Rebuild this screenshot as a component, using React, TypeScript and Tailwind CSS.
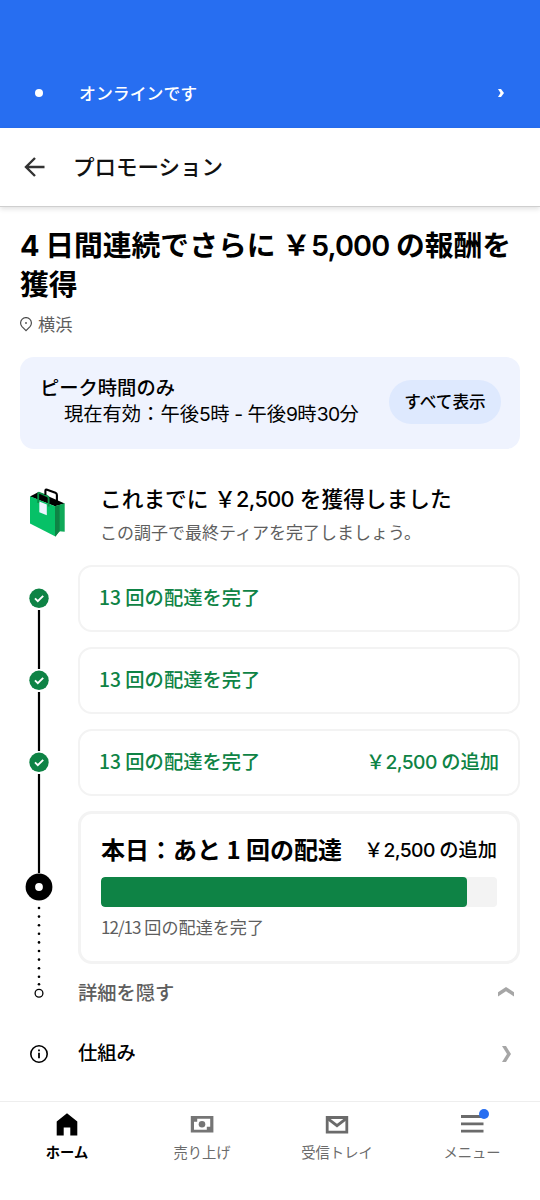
import React from "react";

interface StepCardProps {
    label: React.ReactNode;
    bonus?: React.ReactNode;
}

interface NavItemProps {
    label: string;
    active?: boolean;
    icon: React.ReactNode;
}

const checkpoints = [33, 115, 197];
const dots = [343, 351.6, 360.2, 368.8, 377.4, 386, 394.6, 403.2, 411.8, 419.2];

const progress = 12 / 13;

// Full-width yen sign
const YEN = "\uFFE5";

function Num({ children }: { children: React.ReactNode }) {
    return <span className="font-[Inter,sans-serif] leading-none tracking-[-0.03em]">{children}</span>;
}

function Timeline() {
    return (
        <svg width="30" height="440" viewBox="0 0 30 440" className="shrink-0">
            <path d="M15 45V104M15 127V186M15 209V308" stroke="#000" strokeWidth="2.2" />
            {checkpoints.map((y) => (
                <g key={y}>
                    <circle cx="15" cy={y + 0.3} r="9.7" fill="#0e8345" />
                    <path d={`M11 ${y + 0.4}l2.8 2.8 5.4-5.4`} fill="none" stroke="#fff" strokeWidth="1.9" />
                </g>
            ))}
            <circle cx="15" cy="322" r="13.4" fill="#000" />
            <circle cx="15" cy="322" r="3.9" fill="#fff" />
            {dots.map((y) => (
                <circle key={y} cx="15" cy={y} r="1.3" fill="#000" />
            ))}
            <circle cx="15" cy="428.3" r="3.9" fill="#fff" stroke="#000" strokeWidth="1.3" />
        </svg>
    );
}

function BagIcon() {
    return (
        <svg width="36" height="50" viewBox="0 0 36 50">
            <path d="M0 8.5 8.5 4 34.7 15.5 25 18.2z" fill="#000" />
            <path d="M0 8.3 25 18.2v30L0 35.5z" fill="#06c167" />
            <path d="M25 18.2 34.7 15.3v28.5l-5.4-.6-3.6 5-.7.2z" fill="#0fa958" />
            <path d="M25 18.2 29.6 17v26.2l-4 5-.6.2z" fill="#0e8345" />
            <path d="M9.3 13.5 16.8 16.5v10.8L9.3 24.3z" fill="#edf5ff" />
            <path d="M8.2 15V6q0-1.7 1.6-1L17 8q1.6.6 1.6 2.2v8.3" fill="none" stroke="#0b8f47" strokeWidth="1.9" />
            <path d="M15.4 7V2.8q0-1.7 1.7-1.1l8.3 3.1q1.5.6 1.5 2.2V15" fill="none" stroke="#000" strokeWidth="2.1" />
        </svg>
    );
}

function StepCard({ label, bonus }: StepCardProps) {
    return (
        <div className="flex h-[67px] items-center justify-between rounded-[14px] border-2 border-[#f3f3f3] pr-[19px] pb-[3px] pl-[19px] text-[19.3px] leading-7 font-medium text-[#0e8345]">
            <span>{label}</span>
            {bonus && <span>{bonus}</span>}
        </div>
    );
}

function NavItem({ label, active, icon }: NavItemProps) {
    return (
        <div
            className={`flex flex-1 flex-col items-center pt-2.5 pr-px text-[14.3px] ${
                active ? "font-bold text-black" : "text-[#6b6b6b]"
            }`}
        >
            {icon}
            <span className="mt-1.5 leading-5">{label}</span>
        </div>
    );
}

export default function App() {
    return (
        <div
            lang="ja"
            className="flex h-[1200px] w-[540px] flex-col overflow-hidden bg-white font-['Noto_Sans_CJK_JP',sans-serif] whitespace-nowrap text-black"
        >
            {/* Online status */}
            <div className="flex h-32 shrink-0 items-center bg-[#276ef1] pt-[58px] pr-9 pl-[35px] text-white">
                <span className="h-2 w-2 rounded-full bg-white" />
                <span className="ml-9 flex-1 text-[16.9px] leading-6 font-medium">オンラインです</span>
                <svg width="6" height="8" viewBox="0 0 6 8">
                    <path d="M0 0H3l3 4-3 4H0l2.5-4z" fill="#fff" />
                </svg>
            </div>

            {/* Page header */}
            <header className="flex h-[79px] shrink-0 items-center border-b border-[#cfcfcf] pl-6 shadow-[0_2px_5px_rgba(0,0,0,0.12)]">
                <svg width="21" height="20" viewBox="0 0 21 20" fill="none" stroke="#333" strokeWidth="2.4">
                    <path d="M20.5 10H2M11 1 2 10l9 9" />
                </svg>
                <h1 className="ml-7 pb-0.5 text-[21.5px] leading-8 font-medium text-[#111]">プロモーション</h1>
            </header>

            <main className="flex-1 px-5 pt-[18px]">
                <h2 className="text-[28.8px] leading-[38.5px] font-bold">
                    <Num>4</Num> 日間連続でさらに {YEN}
                    <span className="font-semibold">
                        <Num>5,000</Num>
                    </span>{" "}
                    の報酬を
                    <br />
                    獲得
                </h2>
                <div className="mt-2.5 flex items-center text-[17.2px] leading-6 text-[#5e5e5e]">
                    <svg width="12" height="15" viewBox="0 0 12 15" fill="none" stroke="#4b4b4b" strokeWidth="1.2">
                        <path d="M6 13.7 2 9.6a5.4 5.4 0 1 1 8 0z" />
                        <circle cx="6" cy="6" r=".9" fill="#4b4b4b" stroke="none" />
                    </svg>
                    <span className="ml-1.5 pb-px">横浜</span>
                </div>

                {/* Peak hours */}
                <section className="mt-5 flex h-[92px] justify-between rounded-[14px] bg-[#eff3fe] pr-[19px] pl-5 text-[19.3px] leading-[27px]">
                    <div className="pt-[17px]">
                        <p className="font-medium">ピーク時間のみ</p>
                        <p className="-mt-px pl-6">
                            現在有効：午後<Num>5</Num>時<Num> - </Num>午後<Num>9</Num>時<Num>30</Num>分
                        </p>
                    </div>
                    <button className="mt-[23px] h-11 w-28 rounded-full bg-[#dee9fe] pb-0.5 text-[16.7px] font-medium">
                        すべて表示
                    </button>
                </section>

                {/* Earned so far */}
                <section className="mt-9 flex h-20 pl-2.5">
                    <div className="w-[70px] pt-[3px]">
                        <BagIcon />
                    </div>
                    <div>
                        <p className="-mt-px text-[21.7px] leading-7 font-medium [word-spacing:1px]">
                            これまでに {YEN}
                            <Num>2,500</Num> を獲得しました
                        </p>
                        <p className="mt-2 text-[17px] leading-6 text-[#5e5e5e]">この調子で最終ティアを完了しましょう。</p>
                    </div>
                </section>

                {/* Tiers */}
                <section className="flex pl-1">
                    <Timeline />
                    <div className="ml-6 flex flex-1 flex-col gap-[15px]">
                        <StepCard label="13 回の配達を完了" />
                        <StepCard label="13 回の配達を完了" />
                        <StepCard
                            label="13 回の配達を完了"
                            bonus={
                                <>
                                    {YEN}
                                    <Num>2,500</Num> の追加
                                </>
                            }
                        />
                        <div className="h-[153px] rounded-[14px] border-[3px] border-[#f3f3f3] px-5 pt-[19px]">
                            <div className="flex items-center justify-between">
                                <span className="text-[24px] leading-8 font-bold">本日：あと 1 回の配達</span>
                                <span className="text-[19.3px] leading-8 font-medium">
                                    {YEN}
                                    <Num>2,500</Num> の追加
                                </span>
                            </div>
                            <div className="mt-3 h-[30px] overflow-hidden rounded-sm bg-[#f3f3f3]">
                                <div className="h-full rounded-sm bg-[#0e8345]" style={{ width: `${progress * 100}%` }} />
                            </div>
                            <p className="mt-2 text-[17.1px] leading-6 text-[#5e5e5e]">
                                <span className="tracking-[-0.06em]">12/13</span> 回の配達を完了
                            </p>
                        </div>
                        <div className="-mt-px flex h-7 items-center justify-between pr-1.5 text-[19.3px] font-medium text-[#5e5e5e]">
                            <span>詳細を隠す</span>
                            <svg width="16" height="10" viewBox="0 0 16 10">
                                <path d="M0 9.5V5.2L8 0l8 5.2v4.3L8 4.3z" fill="#a6a6a6" />
                            </svg>
                        </div>
                    </div>
                </section>

                <section className="mt-8 flex items-center pr-[9px] pl-2.5">
                    <svg width="18" height="18" viewBox="0 0 18 18" className="mt-1">
                        <circle cx="9" cy="9" r="8.2" fill="none" stroke="#000" strokeWidth="1.6" />
                        <path d="M8.1 4.5h1.8v1.8H8.1zM8.1 7.8h1.8v5.5H8.1z" />
                    </svg>
                    <span className="ml-[30px] flex-1 text-[19.3px] leading-7 font-medium">仕組み</span>
                    <svg width="9" height="16" viewBox="0 0 9 16" className="mt-1">
                        <path d="M0 0h4l5 8-5 8H0l5-8z" fill="#a6a6a6" />
                    </svg>
                </section>
            </main>

            {/* Bottom navigation */}
            <nav className="flex h-[99px] shrink-0 border-t border-[#eee]">
                <NavItem
                    active
                    label="ホーム"
                    icon={
                        <svg width="24" height="24" viewBox="0 0 24 24">
                            <path d="M12 1.3 22.3 9.5V23.6h-7v-8.2H8.7v8.2h-7V9.5z" />
                        </svg>
                    }
                />
                <NavItem
                    label="売り上げ"
                    icon={
                        <svg width="24" height="24" viewBox="0 0 24 24" fill="#757575">
                            <path fillRule="evenodd" d="M.8 4h22.6v16.6H.8zM7.2 6.8v3H4v8h12.8v-3h3.4v-8z" />
                            <circle cx="12" cy="12.3" r="3.3" />
                        </svg>
                    }
                />
                <NavItem
                    label="受信トレイ"
                    icon={
                        <svg width="24" height="24" viewBox="0 0 24 24" fill="none" stroke="#6b6b6b">
                            <path d="M2.2 5.5h19.6v14.7H2.2z" strokeWidth="2.8" />
                            <path d="M2.5 6.3 12 13.7l9.5-7.4" strokeWidth="2.8" />
                        </svg>
                    }
                />
                <NavItem
                    label="メニュー"
                    icon={
                        <span className="relative">
                            <svg width="24" height="24" viewBox="0 0 24 24">
                                <path d="M1 4.5h22.5M1 11.8h22.5M1 19.1h22.5" stroke="#6b6b6b" strokeWidth="2.8" />
                            </svg>
                            <span className="absolute -top-[3px] left-[19px] h-2.5 w-2.5 rounded-full bg-[#276ef1]" />
                        </span>
                    }
                />
            </nav>
        </div>
    );
}
